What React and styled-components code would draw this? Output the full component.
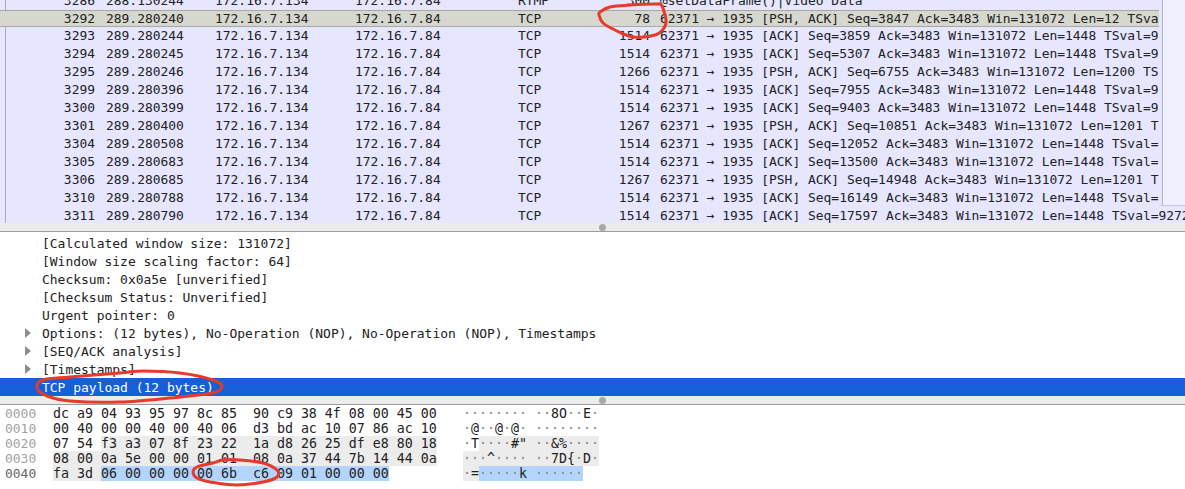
import React from "react";
import styled, { createGlobalStyle } from "styled-components";

const GlobalStyle = createGlobalStyle`
  html, body {
    margin: 0;
    background: #fff;
    overflow: hidden;
  }
`;

const mono = `"DejaVu Sans Mono", "Liberation Mono", monospace`;

const Page = styled.div`
  position: relative;
  width: 1185px;
  height: 489px;
  overflow: hidden;
  background: #fff;
  color: #222;
  font-family: ${mono};
`;

const PacketPane = styled.div`
  position: relative;
  height: 223px;
  background: #e6e6ff;
  overflow: hidden;

  &::before {
    content: "";
    position: absolute;
    left: 5px;
    top: 0;
    bottom: 0;
    width: 1px;
    background: #a9a9bd;
  }
`;

const PacketList = styled.div`
  margin-top: -8px;
`;

const Row = styled.div`
  position: relative;
  display: grid;
  grid-template-columns: 95px 120px 140px 163px 100px 32px 1fr;
  height: ${(p) => (p.$selected ? "17px" : "18px")};
  box-sizing: border-box;
  line-height: ${(p) => (p.$selected ? "15px" : "17px")};
  font-size: 12.95px;
  white-space: pre;
  background: ${(p) => (p.$selected ? "#d6d7ce" : "transparent")};
  border-top: ${(p) => (p.$selected ? "1px solid #a8a89f" : "none")};
  border-bottom: ${(p) => (p.$selected ? "1px solid #a8a89f" : "none")};
`;

const Num = styled.span`
  text-align: right;
`;

const Time = styled.span`
  padding-left: 11px;
`;

const Cell = styled.span``;

const Info = styled.span`
  padding-left: 10px;
  overflow: hidden;
`;

const ScrollGutter = styled.div`
  position: absolute;
  top: 0;
  right: 0;
  width: 26px;
  height: 206px;
  background: #f0f0ff;
  border-left: 3px solid #e6e6ff;
  border-bottom: 1px solid #c8c8d8;
  box-shadow: inset 1px 0 0 #b4b4c2;
  box-sizing: border-box;
`;

const Sash = styled.div`
  height: 9px;
  box-sizing: border-box;
  display: flex;
  align-items: center;
  padding-left: 599px;
  background: #ececec;
  border-bottom: 1px solid #9c9c9c;
`;

const SashHandle = styled.div`
  width: 7px;
  height: 7px;
  border-radius: 50%;
  background: #a8a8a8;
`;

const DetailPane = styled.div`
  height: 164px;
  box-sizing: border-box;
  padding-top: 2px;
`;

const DetailRow = styled.div`
  display: flex;
  align-items: center;
  height: 18px;
  padding-left: 25px;
  font-size: 12.97px;
  white-space: pre;
  background: ${(p) => (p.$selected ? "#155fd9" : "transparent")};
  color: ${(p) => (p.$selected ? "#fff" : "#222")};
`;

const Arrow = styled.span`
  width: 0;
  height: 0;
  margin-right: 11px;
  border-left: 6px solid ${(p) => (p.$hidden ? "transparent" : "#8d8d8d")};
  border-top: 5px solid transparent;
  border-bottom: 5px solid transparent;
`;

const HexPane = styled.div`
  padding-top: 1px;
`;

const HexRow = styled.div`
  display: flex;
  height: 15px;
  line-height: 15px;
  white-space: pre;
`;

const Offset = styled.span`
  width: 48px;
  padding-left: 5px;
  font-size: 12.97px;
  color: ${(p) => (p.$active ? "#666" : "#a2a2a2")};
`;

const HexBytes = styled.span`
  width: 384px;
  font-size: 13.29px;
`;

const HexAscii = styled.span`
  margin-left: 26px;
  font-size: 13.29px;
`;

const tones = { grey: "#ececec", blue: "#b3d5fd" };

const Seg = styled.span`
  display: inline-block;
  background: ${(p) => tones[p.$tone] || "transparent"};
`;

const Dot = styled.span`
  color: #8a8a8a;
`;

const Marks = styled.svg`
  position: absolute;
  inset: 0;
  pointer-events: none;
`;

const tcp = (no, time, len, flags, seq, ack, payload, ts) => ({
  no,
  time,
  len,
  info: `62371 → 1935 [${flags}] Seq=${seq} Ack=${ack} Win=131072 Len=${payload} ${ts}`,
});

const tail = "TSval=927236917 TSecr=1142946877";

const packets = [
  { no: 3286, time: "288.130244", proto: "RTMP", len: 300, info: "@setDataFrame()|Video Data" },
  { ...tcp(3292, "289.280240", 78, "PSH, ACK", 3847, 3483, 12, tail), selected: true },
  tcp(3293, "289.280244", 1514, "ACK", 3859, 3483, 1448, tail),
  tcp(3294, "289.280245", 1514, "ACK", 5307, 3483, 1448, tail),
  tcp(3295, "289.280246", 1266, "PSH, ACK", 6755, 3483, 1200, tail),
  tcp(3299, "289.280396", 1514, "ACK", 7955, 3483, 1448, tail),
  tcp(3300, "289.280399", 1514, "ACK", 9403, 3483, 1448, tail),
  tcp(3301, "289.280400", 1267, "PSH, ACK", 10851, 3483, 1201, tail),
  tcp(3304, "289.280508", 1514, "ACK", 12052, 3483, 1448, tail),
  tcp(3305, "289.280683", 1514, "ACK", 13500, 3483, 1448, tail),
  tcp(3306, "289.280685", 1267, "PSH, ACK", 14948, 3483, 1201, tail),
  tcp(3310, "289.280788", 1514, "ACK", 16149, 3483, 1448, tail),
  tcp(3311, "289.280790", 1514, "ACK", 17597, 3483, 1448, tail),
];

const details = [
  { text: "[Calculated window size: 131072]" },
  { text: "[Window size scaling factor: 64]" },
  { text: "Checksum: 0x0a5e [unverified]" },
  { text: "[Checksum Status: Unverified]" },
  { text: "Urgent pointer: 0" },
  { text: "Options: (12 bytes), No-Operation (NOP), No-Operation (NOP), Timestamps", open: true },
  { text: "[SEQ/ACK analysis]", open: true },
  { text: "[Timestamps]", open: true },
  { text: "TCP payload (12 bytes)", selected: true },
];

const hexRows = [
  {
    offset: "0000",
    hex: [["dc a9 04 93 95 97 8c 85  90 c9 38 4f 08 00 45 00"]],
    ascii: [["········ ··8O··E·"]],
  },
  {
    offset: "0010",
    hex: [["00 40 00 00 40 00 40 06  d3 bd ac 10 07 86 ac 10"]],
    ascii: [["·@··@·@· ········"]],
  },
  {
    offset: "0020",
    hex: [["07 54 "], ["f3 a3 07 8f 23 22  1a d8 26 25 df e8 80 18", "grey"]],
    ascii: [["·T"], ['····#" ··&%····', "grey"]],
  },
  {
    offset: "0030",
    hex: [["08 00 0a 5e 00 00 01 01  08 0a 37 44 7b 14 44 0a", "grey"]],
    ascii: [["···^···· ··7D{·D·", "grey"]],
  },
  {
    offset: "0040",
    active: true,
    hex: [["fa 3d ", "grey"], ["06 00 00 00 00 6b  c6 09 01 00 00 00", "blue"]],
    ascii: [["·=", "grey"], ["·····k ······", "blue"]],
  },
];

// dots stand for unprintable bytes and are drawn fainter than real characters
const renderAscii = (text) =>
  text.split(/(·+)/).map((part, i) =>
    part.startsWith("·") ? <Dot key={i}>{part}</Dot> : part
  );

// hand drawn marker strokes, smoothed through the points
const smooth = (pts) => {
  const n = pts.length;
  let d = `M${pts[0][0]} ${pts[0][1]}`;
  for (let i = 0; i < n; i++) {
    const p0 = pts[(i - 1 + n) % n];
    const p1 = pts[i];
    const p2 = pts[(i + 1) % n];
    const p3 = pts[(i + 2) % n];
    const c1x = p1[0] + (p2[0] - p0[0]) / 6;
    const c1y = p1[1] + (p2[1] - p0[1]) / 6;
    const c2x = p2[0] - (p3[0] - p1[0]) / 6;
    const c2y = p2[1] - (p3[1] - p1[1]) / 6;
    d += ` C${c1x} ${c1y} ${c2x} ${c2y} ${p2[0]} ${p2[1]}`;
  }
  return d;
};

const strokes = [
  [[600, 12], [610, 7], [630, 5], [657, 4], [662, 6], [666, 20], [664, 28], [655, 35], [633, 37], [615, 30], [603, 23], [599, 15]],
  [[37, 388], [43, 380], [70, 377], [120, 373], [143, 371], [180, 373], [213, 380], [222, 387], [212, 393], [170, 398], [120, 402], [70, 401], [47, 396]],
  [[193, 472], [197, 467], [213, 463], [223, 460], [240, 460], [263, 463], [277, 470], [277, 477], [263, 482], [237, 485], [210, 482], [197, 478]],
];

export default function App() {
  return (
    <Page>
      <GlobalStyle />
      <PacketPane>
        <PacketList>
          {packets.map((p) => (
            <Row key={p.no} $selected={p.selected}>
              <Num>{p.no}</Num>
              <Time>{p.time}</Time>
              <Cell>172.16.7.134</Cell>
              <Cell>172.16.7.84</Cell>
              <Cell>{p.proto || "TCP"}</Cell>
              <Num>{p.len}</Num>
              <Info>{p.info}</Info>
            </Row>
          ))}
        </PacketList>
        <ScrollGutter />
      </PacketPane>
      <Sash>
        <SashHandle />
      </Sash>
      <DetailPane>
        {details.map((d) => (
          <DetailRow key={d.text} $selected={d.selected}>
            <Arrow $hidden={!d.open} />
            {d.text}
          </DetailRow>
        ))}
      </DetailPane>
      <Sash>
        <SashHandle />
      </Sash>
      <HexPane>
        {hexRows.map((r) => (
          <HexRow key={r.offset}>
            <Offset $active={r.active}>{r.offset}</Offset>
            <HexBytes>
              {r.hex.map(([text, tone]) => (
                <Seg key={text} $tone={tone}>{text}</Seg>
              ))}
            </HexBytes>
            <HexAscii>
              {r.ascii.map(([text, tone]) => (
                <Seg key={text} $tone={tone}>{renderAscii(text)}</Seg>
              ))}
            </HexAscii>
          </HexRow>
        ))}
      </HexPane>
      <Marks width="1185" height="489">
        {strokes.map((pts, i) => (
          <path key={i} d={smooth(pts)} fill="none" stroke="#e8392b" strokeWidth="3" />
        ))}
      </Marks>
    </Page>
  );
}
